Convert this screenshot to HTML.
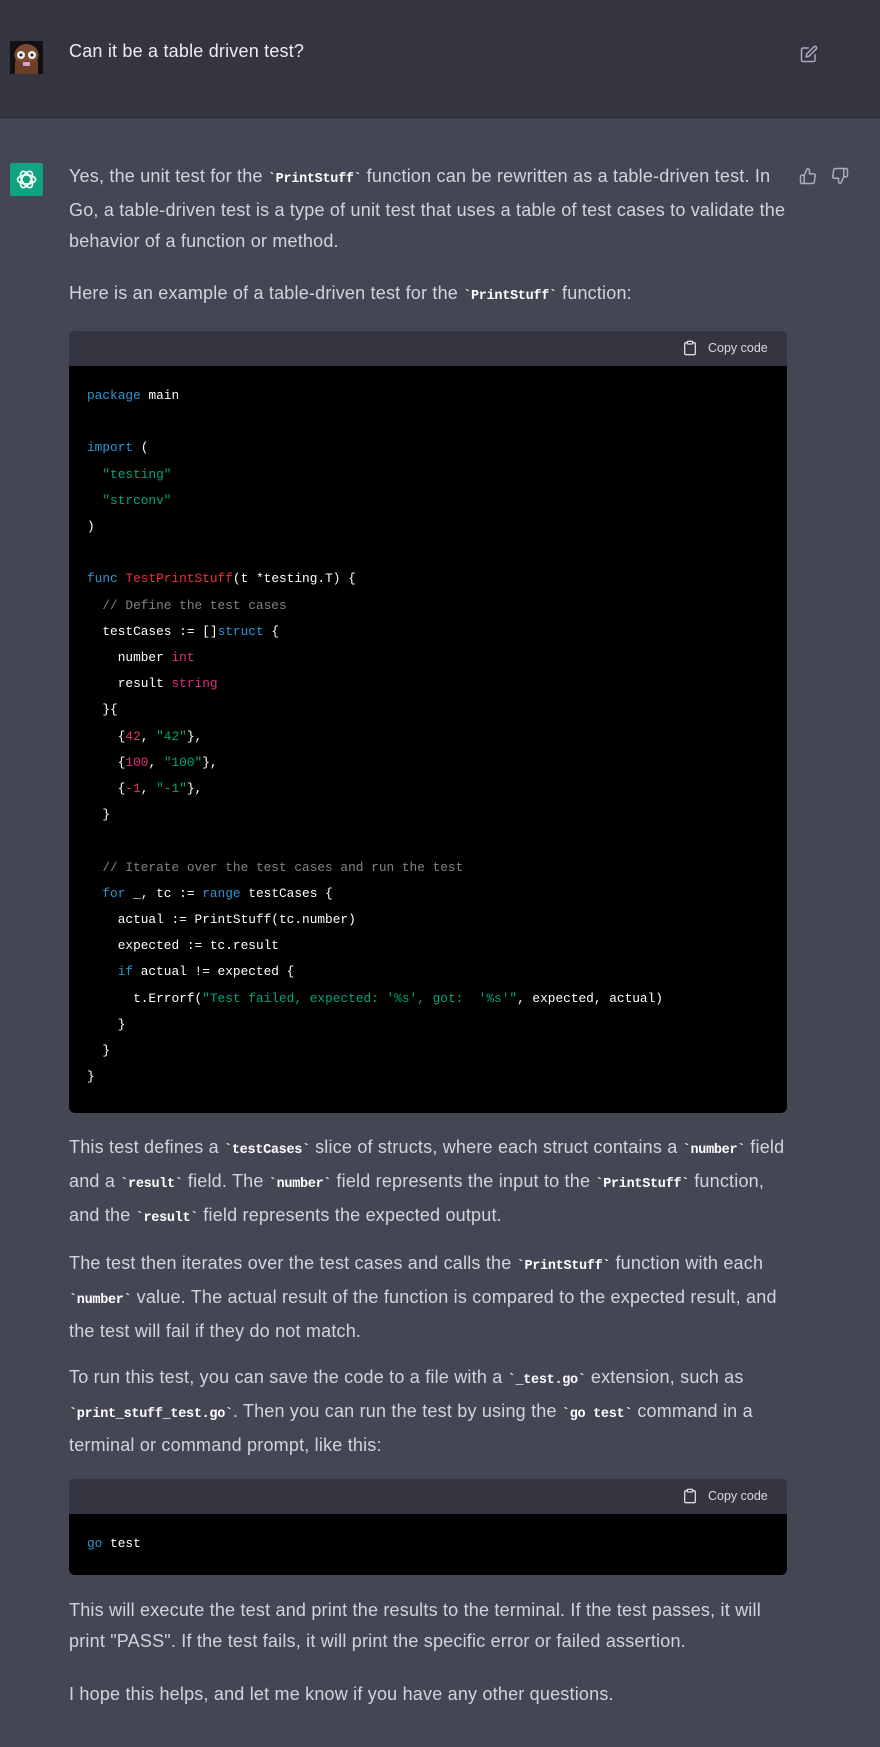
<!DOCTYPE html>
<html><head><meta charset="utf-8"><style>
*{margin:0;padding:0;box-sizing:border-box}
body{width:880px;height:1747px;background:#444654;font-family:"Liberation Sans",sans-serif;color:#d1d5db;position:relative;overflow:hidden}
.user{position:absolute;left:0;top:0;width:880px;height:118px;background:#343541;border-bottom:1px solid #2a2b32}
.t{position:absolute;left:69px;font-size:18px;line-height:31px;white-space:nowrap;letter-spacing:0.2px;color:#d1d5db}
code{font-family:"Liberation Mono",monospace;font-weight:bold;font-size:13.5px;color:#fff;letter-spacing:-0.3px}
.cb{position:absolute;left:69px;width:718px;background:#000;border-radius:6px;overflow:hidden}
.ch{height:35px;background:#343541;position:relative;font-size:12.5px;color:#d9d9e3}
.ch span{position:absolute;left:639px;top:10px}
.ch svg{position:absolute;left:613px;top:9px}
pre{font-family:"Liberation Mono",monospace;font-size:12.8px;line-height:26.2px;color:#fff;padding:17px 0 0 18px}
.k{color:#2e95d3}.s{color:#00a67d}.r{color:#df3079}.f{color:#f22c3d}.c{color:hsla(0,0%,100%,.5)}
</style></head><body>
<div class="user">
<svg style="position:absolute;left:10px;top:41px" width="33" height="33" viewBox="0 0 33 33"><rect width="33" height="33" fill="#111"/><ellipse cx="16.5" cy="14" rx="12" ry="11" fill="#7a4a35"/><rect x="5" y="20" width="23" height="13" fill="#6b3e28"/><circle cx="11" cy="14" r="4" fill="#eee"/><circle cx="22" cy="14" r="4" fill="#eee"/><circle cx="11" cy="14" r="1.5" fill="#222"/><circle cx="22" cy="14" r="1.5" fill="#222"/><rect x="13" y="21" width="7" height="4" fill="#d9a0c8"/></svg>
<div class="t" style="top:36px;color:#ececf1">Can it be a table driven test?</div>
<svg style="position:absolute;left:800px;top:45px" width="18" height="18" viewBox="0 0 24 24" fill="none" stroke="#acacbe" stroke-width="2" stroke-linecap="round" stroke-linejoin="round"><path d="M11 4H4a2 2 0 0 0-2 2v14a2 2 0 0 0 2 2h14a2 2 0 0 0 2-2v-7"/><path d="M18.5 2.5a2.121 2.121 0 0 1 3 3L12 15l-4 1 1-4 9.5-9.5z"/></svg>
</div>
<svg style="position:absolute;left:10px;top:163px" width="33" height="33" viewBox="0 0 33 33"><rect width="33" height="33" rx="2" fill="#10a37f"/><g fill="none" stroke="#fff" stroke-width="1.6"><ellipse cx="16.5" cy="16.5" rx="9" ry="4.5"/><ellipse cx="16.5" cy="16.5" rx="9" ry="4.5" transform="rotate(60 16.5 16.5)"/><ellipse cx="16.5" cy="16.5" rx="9" ry="4.5" transform="rotate(120 16.5 16.5)"/></g></svg>
<svg style="position:absolute;left:799px;top:167px" width="18" height="18" viewBox="0 0 24 24" fill="none" stroke="#acacbe" stroke-width="2" stroke-linecap="round" stroke-linejoin="round"><path d="M14 9V5a3 3 0 0 0-3-3l-4 9v11h11.28a2 2 0 0 0 2-1.7l1.38-9a2 2 0 0 0-2-2.3zM7 22H4a2 2 0 0 1-2-2v-7a2 2 0 0 1 2-2h3"/></svg>
<svg style="position:absolute;left:831px;top:167px" width="18" height="18" viewBox="0 0 24 24" fill="none" stroke="#acacbe" stroke-width="2" stroke-linecap="round" stroke-linejoin="round"><path d="M10 15v4a3 3 0 0 0 3 3l4-9V2H5.72a2 2 0 0 0-2 1.7l-1.38 9a2 2 0 0 0 2 2.3zm7-13h2.67A2.31 2.31 0 0 1 22 4v7a2.310 2.31 0 0 1-2.33 2H17"/></svg>

<div class="t" style="top:161px">Yes, the unit test for the <code>`PrintStuff`</code> function can be rewritten as a table-driven test. In<br>Go, a table-driven test is a type of unit test that uses a table of test cases to validate the<br>behavior of a function or method.</div>
<div class="t" style="top:278px">Here is an example of a table-driven test for the <code>`PrintStuff`</code> function:</div>

<div class="cb" style="top:331px;height:782px">
<div class="ch"><svg width="16" height="16" viewBox="0 0 24 24" fill="none" stroke="#d9d9e3" stroke-width="2" stroke-linecap="round" stroke-linejoin="round"><path d="M16 4h2a2 2 0 0 1 2 2v14a2 2 0 0 1-2 2H6a2 2 0 0 1-2-2V6a2 2 0 0 1 2-2h2"/><rect x="8" y="2" width="8" height="4" rx="1"/></svg><span>Copy code</span></div>
<pre><span class="k">package</span> main

<span class="k">import</span> (
  <span class="s">"testing"</span>
  <span class="s">"strconv"</span>
)

<span class="k">func</span> <span class="f">TestPrintStuff</span>(t *testing.T) {
  <span class="c">// Define the test cases</span>
  testCases := []<span class="k">struct</span> {
    number <span class="r">int</span>
    result <span class="r">string</span>
  }{
    {<span class="r">42</span>, <span class="s">"42"</span>},
    {<span class="r">100</span>, <span class="s">"100"</span>},
    {<span class="r">-1</span>, <span class="s">"-1"</span>},
  }

  <span class="c">// Iterate over the test cases and run the test</span>
  <span class="k">for</span> _, tc := <span class="k">range</span> testCases {
    actual := PrintStuff(tc.number)
    expected := tc.result
    <span class="k">if</span> actual != expected {
      t.Errorf(<span class="s">"Test failed, expected: '%s', got:  '%s'"</span>, expected, actual)
    }
  }
}</pre>
</div>

<div class="t" style="top:1132px">This test defines a <code>`testCases`</code> slice of structs, where each struct contains a <code>`number`</code> field<br>and a <code>`result`</code> field. The <code>`number`</code> field represents the input to the <code>`PrintStuff`</code> function,<br>and the <code>`result`</code> field represents the expected output.</div>
<div class="t" style="top:1248px">The test then iterates over the test cases and calls the <code>`PrintStuff`</code> function with each<br><code>`number`</code> value. The actual result of the function is compared to the expected result, and<br>the test will fail if they do not match.</div>
<div class="t" style="top:1362px">To run this test, you can save the code to a file with a <code>`_test.go`</code> extension, such as<br><code>`print_stuff_test.go`</code>. Then you can run the test by using the <code>`go test`</code> command in a<br>terminal or command prompt, like this:</div>

<div class="cb" style="top:1479px;height:96px">
<div class="ch"><svg width="16" height="16" viewBox="0 0 24 24" fill="none" stroke="#d9d9e3" stroke-width="2" stroke-linecap="round" stroke-linejoin="round"><path d="M16 4h2a2 2 0 0 1 2 2v14a2 2 0 0 1-2 2H6a2 2 0 0 1-2-2V6a2 2 0 0 1 2-2h2"/><rect x="8" y="2" width="8" height="4" rx="1"/></svg><span>Copy code</span></div>
<pre><span class="k">go</span> test</pre>
</div>

<div class="t" style="top:1595px">This will execute the test and print the results to the terminal. If the test passes, it will<br>print "PASS". If the test fails, it will print the specific error or failed assertion.</div>
<div class="t" style="top:1679px">I hope this helps, and let me know if you have any other questions.</div>
</body></html>
